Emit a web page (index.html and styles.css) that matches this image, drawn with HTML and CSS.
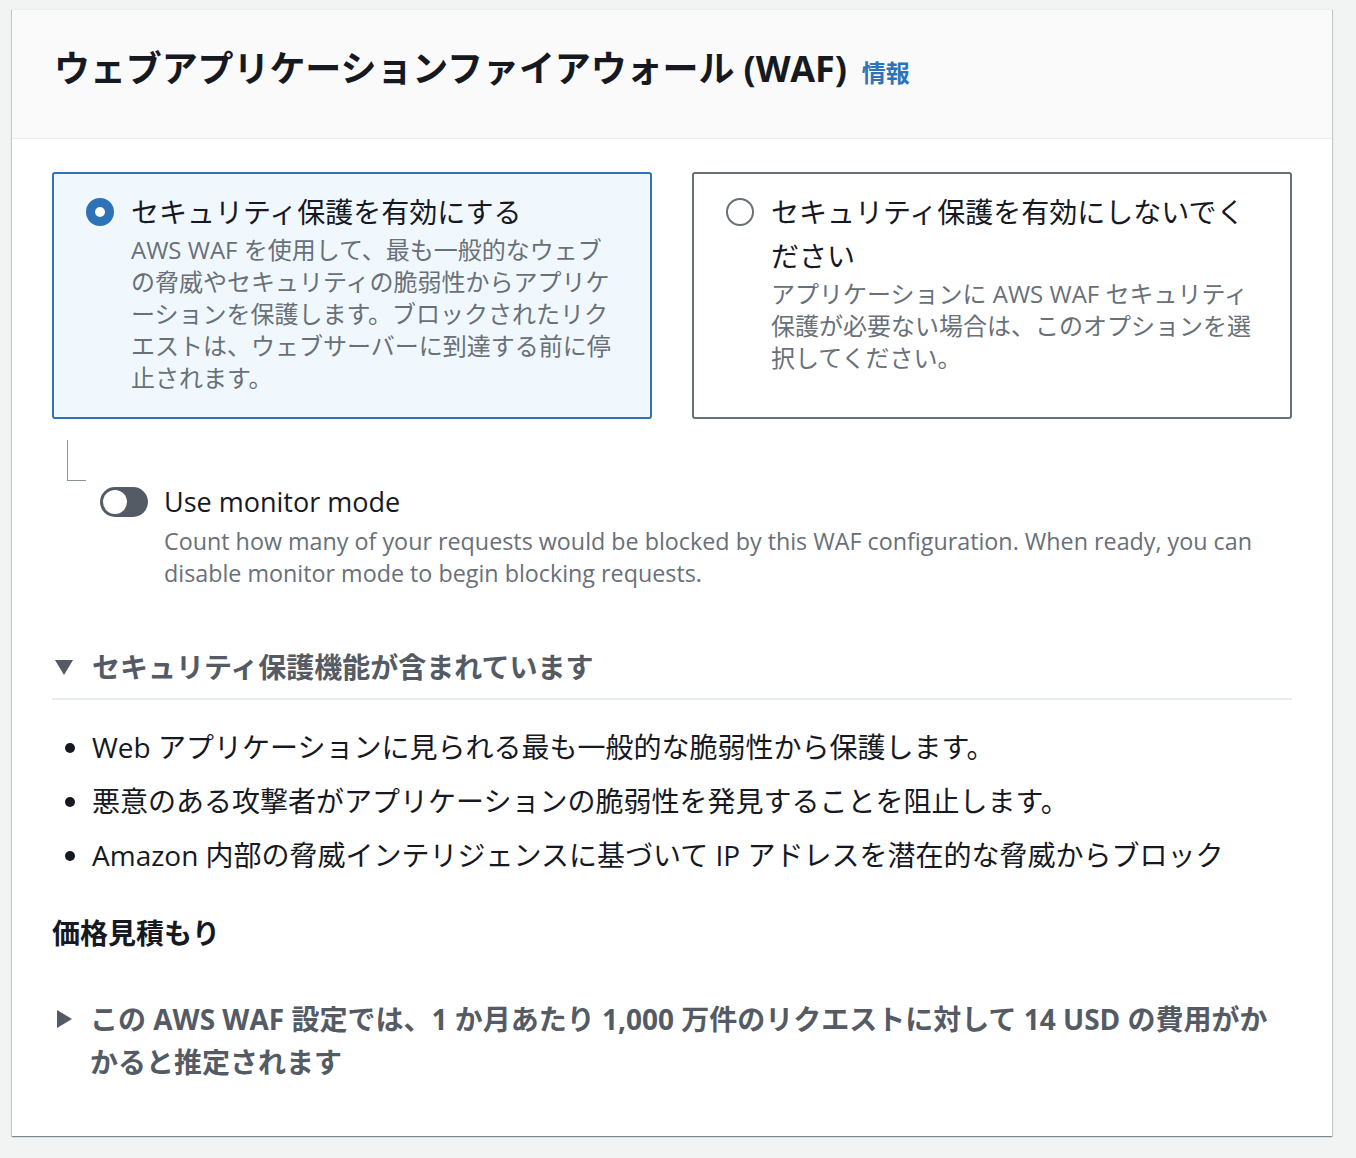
FILE: index.html
```html
<!DOCTYPE html>
<html lang="ja">
<head>
<meta charset="utf-8">
<title>WAF</title>
<link rel="stylesheet" href="styles.css">
</head>
<body>
<div class="page">
  <section class="card">
    <header class="card-header">
      <h2 class="card-title">ウェブアプリケーションファイアウォール (WAF)</h2>
      <a class="info-link">情報</a>
    </header>
    <div class="card-body">
      <div class="tiles">
        <div class="tile tile-selected">
          <span class="radio radio-checked"></span>
          <div class="tile-text">
            <div class="tile-title">セキュリティ保護を有効にする</div>
            <div class="tile-desc">AWS WAF を使用して、最も一般的なウェブの脅威やセキュリティの脆弱性からアプリケーションを保護します。ブロックされたリクエストは、ウェブサーバーに到達する前に停止されます。</div>
          </div>
        </div>
        <div class="tile">
          <span class="radio"></span>
          <div class="tile-text">
            <div class="tile-title">セキュリティ保護を有効にしないでください</div>
            <div class="tile-desc">アプリケーションに AWS WAF セキュリティ保護が必要ない場合は、このオプションを選択してください。</div>
          </div>
        </div>
      </div>

      <div class="connector"></div>

      <div class="monitor">
        <span class="toggle"><span class="knob"></span></span>
        <div class="monitor-text">
          <div class="monitor-label">Use monitor mode</div>
          <div class="monitor-desc">Count how many of your requests would be blocked by this WAF configuration. When ready, you can disable monitor mode to begin blocking requests.</div>
        </div>
      </div>

      <div class="expander">
        <div class="expander-header">
          <svg class="caret-down" width="18" height="15" viewBox="0 0 18 15"><polygon points="0,0 18,0 9,15" fill="#545b64"/></svg>
          <span class="expander-title">セキュリティ保護機能が含まれています</span>
        </div>
        <ul class="features">
          <li>Web アプリケーションに見られる最も一般的な脆弱性から保護します。</li>
          <li>悪意のある攻撃者がアプリケーションの脆弱性を発見することを阻止します。</li>
          <li>Amazon 内部の脅威インテリジェンスに基づいて IP アドレスを潜在的な脅威からブロック</li>
        </ul>
      </div>

      <h3 class="pricing-title">価格見積もり</h3>

      <div class="price-row">
        <svg class="caret-right" width="15" height="18" viewBox="0 0 15 18"><polygon points="0,0 15,9 0,18" fill="#545b64"/></svg>
        <span class="price-text">この AWS WAF 設定では、1 か月あたり 1,000 万件のリクエストに対して 14 USD の費用がかかると推定されます</span>
      </div>
    </div>
  </section>
</div>
</body>
</html>
```

FILE: styles.css
```css
* { box-sizing: border-box; }

body {
  margin: 0;
  background: #f2f3f3;
  font-family: "Open Sans", "Noto Sans CJK JP", sans-serif;
  color: #16191f;
}

.page {
  padding: 9px 24px 22px 12px;
}

.card {
  width: 1320px;
  background: #fff;
  box-shadow: 0 1px 1px 0 rgba(0, 28, 36, 0.3), 1px 1px 1px 0 rgba(0, 28, 36, 0.15), -1px 1px 1px 0 rgba(0, 28, 36, 0.15);
  border-top: 1px solid #eaeded;
}

.card-header {
  display: flex;
  align-items: baseline;
  gap: 15px;
  background: #fafafa;
  border-bottom: 1px solid #eaeded;
  padding: 33px 40px 43px 42px;
}

.card-title {
  margin: 0;
  font-size: 36px;
  line-height: 52px;
  font-weight: 700;
  letter-spacing: -0.1px;
  color: #16191f;
}

.info-link {
  font-size: 24px;
  font-weight: 700;
  color: #2e73b8;
}

.card-body {
  padding: 33px 40px 52px;
}

.tiles {
  display: grid;
  grid-template-columns: 600px 600px;
  gap: 40px;
}

.tile {
  display: flex;
  gap: 17px;
  border: 2px solid #687078;
  border-radius: 3px;
  padding: 16px 26px 23px 32px;
  background: #fff;
}

.tile-selected {
  border-color: #2e73b8;
  background: #f1f8fd;
}

.radio {
  flex: none;
  width: 28px;
  height: 28px;
  border-radius: 50%;
  border: 2px solid #687078;
  background: #fff;
  margin-top: 8px;
}

.radio-checked {
  border: 9px solid #2e73b8;
}

.tile-text {
  flex: 1;
  min-width: 0;
}

.tile-title {
  font-size: 28px;
  line-height: 44px;
  color: #16191f;
}

.tile-desc {
  font-size: 24px;
  line-height: 32px;
  color: #687078;
}

.connector {
  width: 19px;
  height: 41px;
  margin: 21px 0 0 15px;
  border-left: 1px solid #879596;
  border-bottom: 1px solid #879596;
}

.monitor {
  display: flex;
  gap: 16px;
  margin: 3px 0 0 48px;
}

.toggle {
  flex: none;
  display: flex;
  align-items: center;
  width: 48px;
  height: 30px;
  padding: 0 3px;
  margin-top: 3px;
  border-radius: 15px;
  background: #545b64;
}

.knob {
  width: 24px;
  height: 24px;
  border-radius: 50%;
  background: #fff;
}

.monitor-label {
  font-size: 27px;
  line-height: 36px;
  color: #16191f;
}

.monitor-desc {
  margin-top: 5px;
  font-size: 23.3px;
  line-height: 32px;
  color: #687078;
}

.expander {
  margin-top: 56px;
}

.expander-header {
  display: flex;
  align-items: center;
  gap: 19px;
  padding: 0 0 9px 3px;
  border-bottom: 2px solid #eaeded;
}

.caret-down {
  flex: none;
}

.expander-title {
  font-size: 28px;
  line-height: 44px;
  font-weight: 700;
  color: #545b64;
}

.features {
  margin: 27px 0 0;
  padding-left: 40px;
}

.features li {
  font-size: 28px;
  line-height: 40px;
  margin-bottom: 14px;
}

.features li:last-child {
  margin-bottom: 0;
}

.pricing-title {
  margin: 36px 0 0;
  font-size: 28px;
  line-height: 44px;
  font-weight: 700;
  color: #16191f;
}

.price-row {
  display: flex;
  align-items: flex-start;
  gap: 18px;
  margin-top: 43px;
  padding-left: 5px;
}

.caret-right {
  flex: none;
  margin-top: 12px;
}

.price-text {
  font-size: 28px;
  line-height: 43px;
  font-weight: 700;
  color: #545b64;
}
```
